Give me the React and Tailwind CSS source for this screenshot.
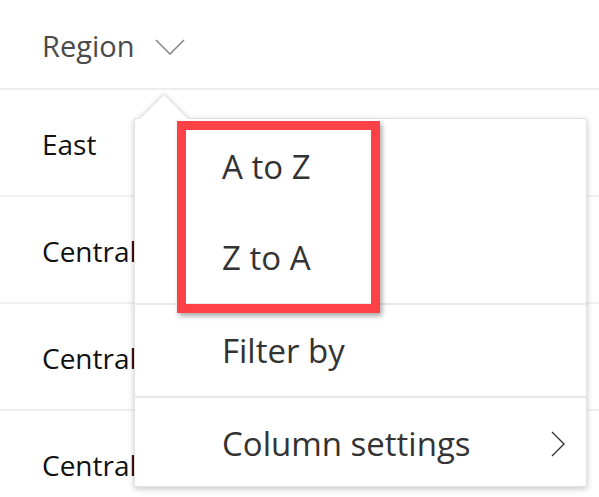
import React from 'react';

const rows = ['East', 'Central', 'Central', 'Central'];

function ChevronDown() {
    return (
        <svg width="30" height="16" viewBox="0 0 30 16" className="ml-[21px] mt-[2px]">
            <path d="M1 1 L15 15 L29 1" fill="none" stroke="#8a8a8a" strokeWidth="1.6" />
        </svg>
    );
}

function ChevronRight() {
    return (
        <svg width="14" height="26" viewBox="0 0 14 26">
            <path d="M1 1 L13 13 L1 25" fill="none" stroke="#333" strokeWidth="1.4" />
        </svg>
    );
}

function MenuItem({ label, children }) {
    return (
        <div className="flex h-[91px] items-center justify-between pl-[87px] pr-[21px] text-[33px] text-[#333]">
            <span>{label}</span>
            {children}
        </div>
    );
}

export default function App() {
    return (
        <div className="relative h-[497px] w-[599px] overflow-hidden bg-white font-['Open_Sans',sans-serif]">
            {/* table */}
            <div className="flex h-[90px] items-center border-b-2 border-[#ededed] pl-[42px] pt-[4px] text-[29px] text-[#4a4a4a]">
                <span>Region</span>
                <ChevronDown />
            </div>
            {rows.map((r, i) => (
                <div key={i} className="flex h-[107px] items-center border-b-2 border-[#f0f0f0] pl-[42px] pt-[2px] text-[28px] text-[#111]">
                    {r}
                </div>
            ))}

            {/* callout menu */}
            <div className="absolute left-[134px] top-[118px] w-[453px] h-[369px] bg-white border border-[#e2e2e2] shadow-[0_2px_6px_rgba(0,0,0,0.22)]">
                <div className="absolute left-[12px] top-[-17px] h-[34px] w-[34px] rotate-45 bg-white shadow-[-2px_-2px_4px_rgba(0,0,0,0.12)]" />
                <div className="relative bg-white pt-[2px]">
                    <MenuItem label="A to Z" />
                    <MenuItem label="Z to A" />
                </div>
                <div className="border-t-2 border-[#e8e8e8]">
                    <MenuItem label="Filter by" />
                </div>
                <div className="border-t-2 border-[#e8e8e8]">
                    <MenuItem label="Column settings">
                        <ChevronRight />
                    </MenuItem>
                </div>
            </div>

            {/* highlight */}
            <div className="absolute left-[177px] top-[121px] h-[192px] w-[203px] border-[9px] border-[#fc4246] shadow-[2px_3px_5px_rgba(0,0,0,0.35)]" />
        </div>
    );
}
